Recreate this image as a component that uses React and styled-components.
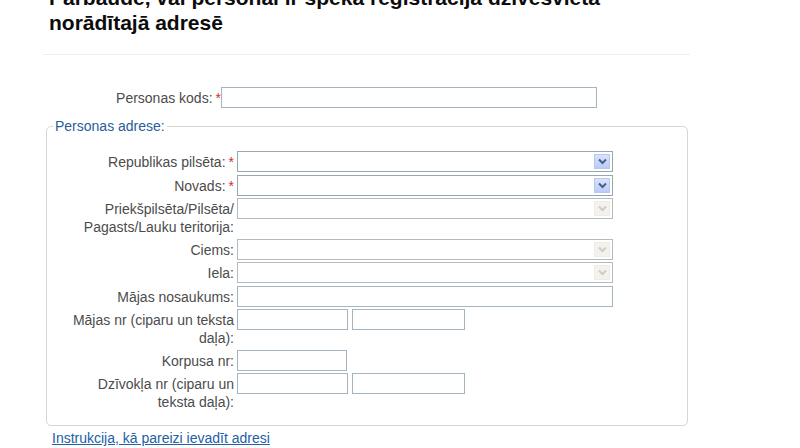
import styled, { createGlobalStyle } from "styled-components";

const GlobalStyle = createGlobalStyle`
  body {
    margin: 0;
    background: #ffffff;
    font-family: "Liberation Sans", Arial, sans-serif;
  }
`;

const Page = styled.div`
  width: 647px;
  padding-left: 43px;
  height: 448px;
  overflow: hidden;
`;

const Title = styled.h1`
  margin: -15px 0 0 0;
  padding-left: 6px;
  font-size: 21px;
  line-height: 25px;
  font-weight: bold;
  color: #0c0c0c;
`;

const Separator = styled.hr`
  margin: 19px 0 0 0;
  border: 0;
  border-top: 1px solid #eeeeec;
`;

const CodeRow = styled.div`
  display: flex;
  align-items: center;
  margin-top: 32px;
`;

const CodeLabel = styled.label`
  width: 178px;
  text-align: right;
  font-size: 14px;
  color: #4c4c4c;
`;

const Star = styled.span`
  color: #d42a2a;
  margin-left: 3px;
`;

const TextInput = styled.div`
  box-sizing: border-box;
  width: ${(p) => p.$w}px;
  height: 21px;
  border: 1px solid #a4b4c0;
  background: #fff;
`;

const Fieldset = styled.fieldset`
  margin: 10px 0 0 3px;
  width: 642px;
  box-sizing: border-box;
  border: 1px solid #d6d6d2;
  border-radius: 5px;
  padding: 16px 13px 14px 13px;
`;

const Legend = styled.legend`
  margin-left: -7px;
  padding: 0 2px;
  font-size: 14px;
  line-height: 17px;
  color: #2a5d9c;
`;

const Form = styled.div`
  display: grid;
  grid-template-columns: 174px auto;
  column-gap: 3px;
  row-gap: 2.5px;
  align-items: start;
`;

const Label = styled.div`
  text-align: right;
  font-size: 14px;
  line-height: 18px;
  padding-top: 2px;
  color: #4c4c4c;
`;

const Fields = styled.div`
  display: flex;
  gap: 4px;
`;

const Select = styled.div`
  box-sizing: border-box;
  width: 376px;
  height: 21px;
  border: 1px solid ${(p) => (p.$disabled ? "#b4bcc2" : "#98a6b0")};
  background: #fff;
  display: flex;
  justify-content: flex-end;
  align-items: center;
  padding-right: 2px;
`;

const Arrow = styled.span`
  box-sizing: border-box;
  width: 16px;
  height: 15px;
  display: flex;
  align-items: center;
  justify-content: center;
  border: 1px solid ${(p) => (p.$disabled ? "#eeece6" : "#b6c8f2")};
  background: ${(p) =>
    p.$disabled
      ? "#f3f2ed"
      : "linear-gradient(#d8e3fd, #b9cbf8)"};
  color: ${(p) => (p.$disabled ? "#cfcdc2" : "#4a5e86")};
`;

const Link = styled.a`
  display: block;
  margin: 4px 0 0 9px;
  font-size: 14px;
  line-height: 17px;
  color: #2260a8;
  text-decoration: underline;
`;

function DropDown({ disabled }) {
  return (
    <Select $disabled={disabled}>
      <Arrow $disabled={disabled}>
        <svg width="9" height="7" viewBox="0 0 9 7">
          <path d="M1 1.5 L4.5 5 L8 1.5" fill="none" stroke="currentColor" strokeWidth="2" />
        </svg>
      </Arrow>
    </Select>
  );
}

const rows = [
  { label: "Republikas pilsēta:", required: true, kind: "select" },
  { label: "Novads:", required: true, kind: "select" },
  { label: "Priekšpilsēta/Pilsēta/ Pagasts/Lauku teritorija:", kind: "select", disabled: true },
  { label: "Ciems:", kind: "select", disabled: true },
  { label: "Iela:", kind: "select", disabled: true },
  { label: "Mājas nosaukums:", kind: "input", widths: [376] },
  { label: "Mājas nr (ciparu un teksta daļa):", kind: "input", widths: [111, 113] },
  { label: "Korpusa nr:", kind: "input", widths: [110] },
  { label: "Dzīvokļa nr (ciparu un teksta daļa):", kind: "input", widths: [111, 113] },
];

export default function App() {
  return (
    <>
      <GlobalStyle />
      <Page>
        <Title>Pārbaude, vai personai ir spēkā reģistrācija dzīvesvietā norādītajā adresē</Title>
        <Separator />
        <CodeRow>
          <CodeLabel>
            Personas kods:<Star>*</Star>
          </CodeLabel>
          <TextInput $w={376} />
        </CodeRow>
        <Fieldset>
          <Legend>Personas adrese:</Legend>
          <Form>
            {rows.map((r) => (
              <>
                <Label key={r.label + "l"}>
                  {r.label}
                  {r.required && <Star>*</Star>}
                </Label>
                <Fields key={r.label + "f"}>
                  {r.kind === "select" ? (
                    <DropDown disabled={r.disabled} />
                  ) : (
                    r.widths.map((w, i) => <TextInput key={i} $w={w} />)
                  )}
                </Fields>
              </>
            ))}
          </Form>
        </Fieldset>
        <Link href="#">Instrukcija, kā pareizi ievadīt adresi</Link>
      </Page>
    </>
  );
}
